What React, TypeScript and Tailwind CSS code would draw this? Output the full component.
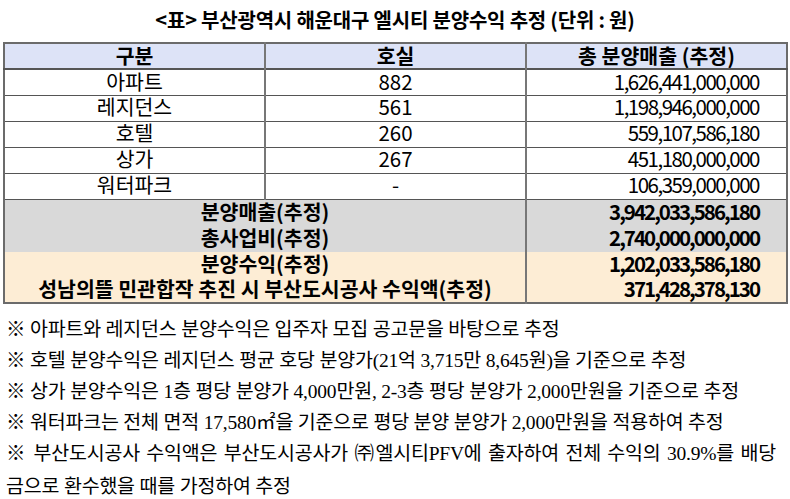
import React from "react";

const rows = [
  { name: "아파트", units: "882", amount: "1,626,441,000,000" },
  { name: "레지던스", units: "561", amount: "1,198,946,000,000" },
  { name: "호텔", units: "260", amount: "559,107,586,180" },
  { name: "상가", units: "267", amount: "451,180,000,000" },
  { name: "워터파크", units: "-", amount: "106,359,000,000" },
];

const totals = [
  { label: "분양매출(추정)", amount: "3,942,033,586,180", bg: "bg-[#d9d9d9]" },
  { label: "총사업비(추정)", amount: "2,740,000,000,000", bg: "bg-[#d9d9d9]" },
  { label: "분양수익(추정)", amount: "1,202,033,586,180", bg: "bg-[#fdedd5]" },
  { label: "성남의뜰 민관합작 추진 시 부산도시공사 수익액(추정)", amount: "371,428,378,130", bg: "bg-[#fdedd5]" },
];

const notes = [
  "※ 아파트와 레지던스 분양수익은 입주자 모집 공고문을 바탕으로 추정",
  "※ 호텔 분양수익은 레지던스 평균 호당 분양가(21억 3,715만 8,645원)을 기준으로 추정",
  "※ 상가 분양수익은 1층 평당 분양가 4,000만원, 2-3층 평당 분양가 2,000만원을 기준으로 추정",
  "※ 워터파크는 전체 면적 17,580㎡을 기준으로 평당 분양 분양가 2,000만원을 적용하여 추정",
];

const sans = "[font-family:'Malgun_Gothic','Noto_Sans_CJK_KR',sans-serif]";

export default function App() {
  return (
    <div className="w-[790px] h-[499px] bg-white overflow-hidden text-black">
      <div className={`${sans} pt-[7px] h-[42px] text-center text-[20px] font-bold leading-[26px] tracking-[-0.2px]`}>
        &lt;표&gt; 부산광역시 해운대구 엘시티 분양수익 추정 (단위 : 원)
      </div>

      <table className={`${sans} ml-[3px] w-[785px] table-fixed border-collapse border-2 border-[#6b6b6b] text-[20.5px] leading-none`}>
        <thead>
          <tr className="h-[26px] bg-[#dde3f7] font-bold border-b-2 border-[#555]">
            <th className="border-r-2 border-[#777] font-bold pb-[2px]">구분</th>
            <th className="border-r-2 border-[#777] font-bold pb-[2px]">호실</th>
            <th className="font-bold pb-[2px]">총 분양매출 (추정)</th>
          </tr>
        </thead>
        <tbody>
          {rows.map((r) => (
            <tr key={r.name} className="h-[26px] border-b border-[#555]">
              <td className="border-r-2 border-[#777] text-center pb-[3px]">{r.name}</td>
              <td className="border-r-2 border-[#777] text-center pb-[3px]">{r.units}</td>
              <td className="text-right pr-[27px] pb-[3px] tracking-[-1.5px]">{r.amount}</td>
            </tr>
          ))}
          {totals.map((t, i) => (
            <tr key={t.label} className={`${t.bg} font-bold ${i < 2 ? "h-[26.5px]" : "h-[25.5px]"}`}>
              <td colSpan={2} className="border-r-2 border-[#777] text-center pb-[3px]">{t.label}</td>
              <td className="text-right pr-[27px] pb-[3px] tracking-[-2px]">{t.amount}</td>
            </tr>
          ))}
        </tbody>
      </table>

      <div className="pl-[6px] pr-[14px] pt-[10px] [font-family:'Liberation_Serif','Noto_Sans_CJK_KR',serif] text-[19.5px] leading-[31px] tracking-[-0.2px]">
        {notes.map((n) => (
          <div key={n} className="whitespace-nowrap">{n}</div>
        ))}
        <div className="text-justify [text-align-last:justify] whitespace-nowrap">
          ※ 부산도시공사 수익액은 부산도시공사가 ㈜엘시티PFV에 출자하여 전체 수익의 30.9%를 배당
        </div>
        <div className="pt-[2px]">금으로 환수했을 때를 가정하여 추정</div>
      </div>
    </div>
  );
}
